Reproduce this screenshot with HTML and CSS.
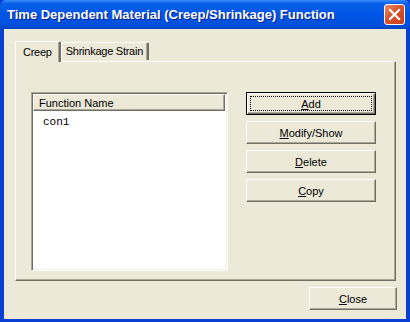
FILE: index.html
```html
<!doctype html>
<html lang="en">
<head>
	<meta charset="UTF-8">
	<title>Time Dependent Material (Creep/Shrinkage) Function</title>
<link rel="stylesheet" href="styles.css">
</head>
<body>

<div class="window">
	<div class="titlebar">
		<span class="title">Time Dependent Material (Creep/Shrinkage) Function</span>
		<span class="close-x">
			<svg width="21" height="21" viewBox="0 0 21 21">
				<path d="M6 6 L15 15 M15 6 L6 15" stroke="#fff" stroke-width="2.2" stroke-linecap="square"/>
			</svg>
		</span>
	</div>

	<div class="client">
		<div class="tabs">
			<div class="tab active">Creep</div>
			<div class="tab">Shrinkage Strain</div>
		</div>
		<div class="panel">
			<div class="listbox">
				<div class="list-head">Function Name</div>
				<div class="list-body">
					<div class="item">con1</div>
				</div>
			</div>
			<div class="buttons">
				<button class="btn default"><span class="focus"><u>A</u>dd</span></button>
				<button class="btn"><u>M</u>odify/Show</button>
				<button class="btn"><u>D</u>elete</button>
				<button class="btn"><u>C</u>opy</button>
			</div>
		</div>
		<div class="footer">
			<button class="btn close"><u>C</u>lose</button>
		</div>
	</div>
</div>

</body>
</html>
```

FILE: styles.css
```css
body {
	margin: 0;
	font-family: "Liberation Sans", Arial, sans-serif;
	font-size: 11px;
}
.window {
	width: 410px;
	height: 322px;
	box-sizing: border-box;
	background: #0a3fd4;
	padding: 0 4px 3px 4px;
	display: flex;
	flex-direction: column;
}
.titlebar {
	height: 29px;
	margin: 0 -4px;
	background: linear-gradient(to bottom, #3c8dfb 0%, #0a5fe9 12%, #0055e5 50%, #0150dc 85%, #0046c4 100%);
	display: flex;
	align-items: center;
	padding: 0 5px 0 7px;
	border-radius: 6px 6px 0 0;
}
.title {
	flex: 1;
	color: #fff;
	font-weight: bold;
	font-size: 13px;
	text-shadow: 1px 1px #0a1e8c;
}
.close-x {
	width: 21px;
	height: 21px;
	box-sizing: border-box;
	border: 1px solid #fff;
	border-radius: 3px;
	background: linear-gradient(135deg, #e98b6c 0%, #d9522a 45%, #c4401c 100%);
	display: flex;
}
.close-x svg {
	margin: -1px;
}
.client {
	flex: 1;
	background: #ece9d8;
	padding: 12px 10px 0 11px;
	display: flex;
	flex-direction: column;
}
.tabs {
	display: flex;
	align-items: flex-end;
	height: 20px;
	position: relative;
	z-index: 1;
}
.tab {
	height: 18px;
	box-sizing: border-box;
	padding: 2px 4px 0 4px;
	letter-spacing: -0.25px;
	border-top: 1px solid #fff;
	border-left: 1px solid #fff;
	border-right: 2px solid;
	border-right-color: #716f64;
	box-shadow: inset -1px 0 #aca899;
	border-radius: 2px 2px 0 0;
	margin-bottom: 1px;
}
.tab.active {
	height: 21px;
	padding: 4px 7px 0 7px;
	margin-bottom: -1px;
	background: #ece9d8;
}
.panel {
	height: 220px;
	box-sizing: border-box;
	border: 1px solid;
	border-color: #fff #716f64 #716f64 #fff;
	box-shadow: inset -1px -1px #aca899;
	display: flex;
	padding: 30px 0 0 15px;
	gap: 18px;
}
.listbox {
	width: 197px;
	height: 179px;
	box-sizing: border-box;
	border: 1px solid;
	border-color: #aca899 #fff #fff #aca899;
	box-shadow: inset 1px 1px #716f64, inset -1px -1px #f1efe2;
	padding: 1px;
	display: flex;
	flex-direction: column;
	background: #fff;
}
.list-head {
	height: 17px;
	box-sizing: border-box;
	background: #ece9d8;
	border: 1px solid;
	border-color: #fff #716f64 #716f64 #fff;
	box-shadow: inset -1px -1px #aca899;
	padding: 2px 5px 0 5px;
	margin-right: 1px;
}
.list-body {
	flex: 1;
	padding: 5px 0 0 10px;
}
.item {
	font-family: "Liberation Mono", "DejaVu Sans Mono", monospace;
	font-size: 11px;
}
.buttons {
	display: flex;
	flex-direction: column;
	gap: 6px;
}
.btn {
	width: 130px;
	height: 23px;
	box-sizing: border-box;
	background: #ece9d8;
	border: 1px solid;
	border-color: #fff #716f64 #716f64 #fff;
	box-shadow: inset -1px -1px #aca899;
	font-family: "Liberation Sans", Arial, sans-serif;
	font-size: 11px;
	color: #000;
	padding: 0;
	display: flex;
	align-items: center;
	justify-content: center;
}
.btn.default {
	border: 1px solid #000;
	box-shadow: inset 1px 1px #fff, inset -1px -1px #716f64, inset -2px -2px #aca899;
	padding: 3px;
}
.focus {
	flex: 1;
	align-self: stretch;
	display: flex;
	align-items: center;
	justify-content: center;
	border: 1px dotted #000;
}
.footer {
	display: flex;
	justify-content: flex-end;
	padding-top: 6px;
	margin-right: -1px;
}
.btn.close {
	width: 88px;
	height: 23px;
}
```
